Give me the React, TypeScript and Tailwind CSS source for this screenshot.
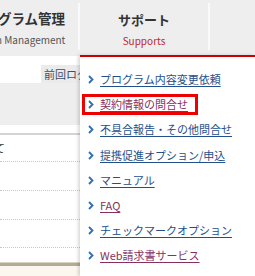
import { useState } from "react";

type MenuItem = { label: string; visited?: boolean; active?: boolean };

const menuItems: MenuItem[] = [
  { label: "プログラム内容変更依頼" },
  { label: "契約情報の問合せ", visited: true, active: true },
  { label: "不具合報告・その他問合せ" },
  { label: "提携促進オプション/申込" },
  { label: "マニュアル" },
  { label: "FAQ", visited: true },
  { label: "チェックマークオプション" },
  { label: "Web請求書サービス", visited: true },
];

const Chevron = () => (
  <svg width="6" height="9" viewBox="0 0 6 9" className="shrink-0">
    <polyline points="1,1 4.5,4.5 1,8" fill="none" stroke="#2f6db5" strokeWidth="1.8" />
  </svg>
);

const App = () => {
  const [items] = useState(menuItems);

  return (
    <div
      className="w-[255px] h-[276px] overflow-hidden bg-white flex flex-col"
      style={{ fontFamily: '"Noto Sans CJK JP", "Noto Sans", sans-serif' }}
    >
      {/* ヘッダー */}
      <div className="h-[56px] shrink-0 bg-[#eeeeee] flex">
        <div className="w-[116px] ml-[-38px] shrink-0 flex flex-col items-center pt-[8px]">
          <p className="text-[13.5px] font-bold text-[#333] leading-[20px] whitespace-nowrap mr-[4px]">プログラム管理</p>
          <p className="text-[10px] text-[#555] leading-[14px] mt-[5px] whitespace-nowrap mr-[13px]">Program Management</p>
        </div>
        <div className="w-[2px] h-[47px] mt-[3px] bg-[#fafafa] shrink-0" />
        <div className="w-[128px] shrink-0 flex flex-col items-center pt-[10px]">
          <p className="text-[13px] font-bold text-[#333] leading-[20px] whitespace-nowrap">サポート</p>
          <p className="text-[10px] text-[#c0282d] leading-[14px] mt-[4px] whitespace-nowrap">Supports</p>
        </div>
        <div className="w-[2px] h-[47px] mt-[3px] bg-[#fafafa] shrink-0" />
      </div>

      <div className="flex flex-1 min-h-0">
        {/* 後ろのページ */}
        <div className="w-[80px] shrink-0 overflow-hidden flex flex-col">
          <div className="h-[27px] flex justify-end items-end">
            <div className="w-[39px] h-[18px] bg-[#ebebeb] pl-[3px] overflow-hidden whitespace-nowrap text-[11px] leading-[18px] text-[#3d4d6a]">
              前回ログイン
            </div>
          </div>
          <div className="h-[42px] bg-[#eeeeee]" />
          <div className="h-[8px]" />
          <div className="h-[2px] bg-[#d4d4d4]" />
          <div className="h-[27px] border-b border-dotted border-[#c8c8c8] flex items-center">
            <span className="ml-[-6px] text-[11px] text-[#333]">て</span>
          </div>
          <div className="h-[29px] border-b border-dotted border-[#c8c8c8]" />
          <div className="h-[29px] border-b border-dotted border-[#c8c8c8]" />
          <div className="h-[28px] border-b border-dotted border-[#c8c8c8]" />
          <div className="h-[14px]" />
          <div className="h-[1px] bg-[#d8d3c4]" />
          <div className="h-[3px] bg-[#b3ab93]" />
          <div className="flex-1 bg-[#fbf6ee]" />
        </div>

        {/* サポートメニュー */}
        <div className="w-[175px] shrink-0 bg-white border-t-2 border-[#cc0000] mt-[-1px] shadow-[-2px_0_3px_rgba(0,0,0,0.15)] pt-[10px]">
          {items.map((item) => (
            <div key={item.label} className="h-[25.2px] flex items-center">
              <div
                className={`ml-[2px] h-[21px] flex items-center gap-[6px] pl-[3px] pr-[7px] border-[3px] ${
                  item.active ? "border-[#ee0000]" : "border-transparent"
                }`}
              >
                <Chevron />
                <span
                  className={`text-[11px] leading-[15px] underline underline-offset-2 whitespace-nowrap ${
                    item.visited ? "text-[#86305f]" : "text-[#234f8c]"
                  }`}
                >
                  {item.label}
                </span>
              </div>
            </div>
          ))}
        </div>
      </div>
    </div>
  );
};

export default App;
